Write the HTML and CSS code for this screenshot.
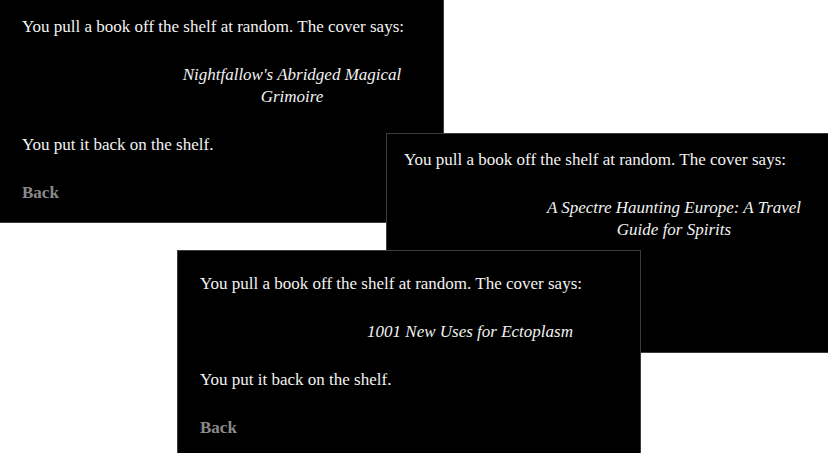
FILE: index.html
```html
<!DOCTYPE html>
<html lang="en">
<head>
<meta charset="utf-8">
<title>Random books</title>
<link rel="stylesheet" href="styles.css">
</head>
<body>
<div class="canvas">
  <section class="panel panel-a">
    <p class="line">You pull a book off the shelf at random. The cover says:</p>
    <p class="title">Nightfallow's Abridged Magical Grimoire</p>
    <p class="line">You put it back on the shelf.</p>
    <p class="line"><a class="back" href="#">Back</a></p>
  </section>
  <section class="panel panel-b">
    <p class="line">You pull a book off the shelf at random. The cover says:</p>
    <p class="title">A Spectre Haunting Europe: A Travel Guide for Spirits</p>
  </section>
  <section class="panel panel-c">
    <p class="line">You pull a book off the shelf at random. The cover says:</p>
    <p class="title">1001 New Uses for Ectoplasm</p>
    <p class="line">You put it back on the shelf.</p>
    <p class="line"><a class="back" href="#">Back</a></p>
  </section>
</div>
</body>
</html>
```

FILE: styles.css
```css
html, body {
  margin: 0;
  padding: 0;
  background: #ffffff;
}

.canvas {
  position: relative;
  width: 828px;
  height: 453px;
  overflow: hidden;
  font-family: "Liberation Serif", "Times New Roman", serif;
  font-size: 17px;
  line-height: 22px;
  color: #f2f2f2;
}

.panel {
  position: absolute;
  box-sizing: border-box;
  background: #000000;
  border: 1px solid #3c3c3c;
  overflow: hidden;
}

.panel p {
  margin: 0 0 26px 0;
}

.title {
  font-style: italic;
  text-align: center;
  margin-left: 130px !important;
  width: 280px;
}

.back {
  color: #8a8a8a;
  font-weight: bold;
  text-decoration: none;
}

.panel-a {
  left: -1px;
  top: -1px;
  width: 445px;
  height: 224px;
  padding: 16px 20px 0 22px;
  z-index: 1;
}

.panel-b {
  left: 386px;
  top: 133px;
  width: 446px;
  height: 220px;
  padding: 15px 20px 0 17px;
  z-index: 2;
}

.panel-c {
  left: 177px;
  top: 250px;
  width: 464px;
  height: 220px;
  padding: 22px 20px 0 22px;
  z-index: 3;
}
```
